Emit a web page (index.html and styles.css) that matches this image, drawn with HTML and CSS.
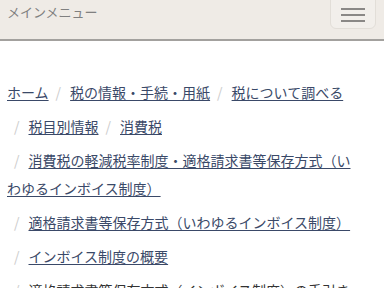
FILE: index.html
```html
<!DOCTYPE html>
<html lang="ja">
<head>
<meta charset="utf-8">
<title>インボイス制度</title>
<link rel="stylesheet" href="styles.css">
</head>
<body>
<header class="header">
  <span class="menu-label">メインメニュー</span>
  <button class="menu-btn" aria-label="メニュー"><span></span><span></span><span></span></button>
</header>
<main class="main">
  <ul class="crumbs"><li class="crumb first"><a href="#">ホーム</a></li><li class="crumb"><a href="#">税の情報・手続・用紙</a></li><li class="crumb"><a href="#">税について調べる</a></li><li class="crumb"><a href="#">税目別情報</a></li><li class="crumb"><a href="#">消費税</a></li><li class="crumb"><a href="#">消費税の軽減税率制度・適格請求書等保存方式（いわゆるインボイス制度）</a></li><li class="crumb"><a href="#">適格請求書等保存方式（いわゆるインボイス制度）</a></li><li class="crumb"><a href="#">インボイス制度の概要</a></li><li class="crumb current">適格請求書等保存方式（インボイス制度）の手引き</li></ul>
</main>
</body>
</html>
```
FILE: styles.css
```css
html, body {
  margin: 0;
  padding: 0;
  background: #ffffff;
  font-family: "Noto Sans CJK JP", "Noto Sans", sans-serif;
}
.header {
  height: 39px;
  background: #efebe6;
  border-bottom: 2px solid #a3a19e;
  display: flex;
  justify-content: space-between;
  align-items: flex-start;
  padding: 0 8px 0 7px;
  box-sizing: content-box;
}
.menu-label {
  font-size: 13px;
  line-height: 24px;
  color: #808080;
}
.menu-btn {
  width: 46px;
  height: 35px;
  margin-top: -6px;
  background: #f2efeb;
  border: 1px solid #e2ded8;
  border-radius: 6px;
  display: flex;
  flex-direction: column;
  justify-content: center;
  align-items: center;
  gap: 4px;
  padding: 6px 0 0;
  box-sizing: border-box;
}
.menu-btn span {
  display: block;
  width: 24px;
  height: 2px;
  background: #8a8886;
}
.main {
  padding: 37px 22px 0 7px;
}
.crumbs {
  list-style: none;
  margin: 0;
  padding: 0;
  font-size: 14px;
  line-height: 28px;
  color: #333;
}
.crumb {
  display: inline-block;
  margin-bottom: 6px;
}
.crumb::before {
  content: "/";
  color: #cccccc;
  padding: 0 9px 0 7px;
}
.crumb.first::before {
  content: none;
}
.crumb a {
  color: #3a4968;
  text-decoration: underline;
  text-underline-offset: 2px;
}
.crumb.current {
  color: #333333;
}
```
